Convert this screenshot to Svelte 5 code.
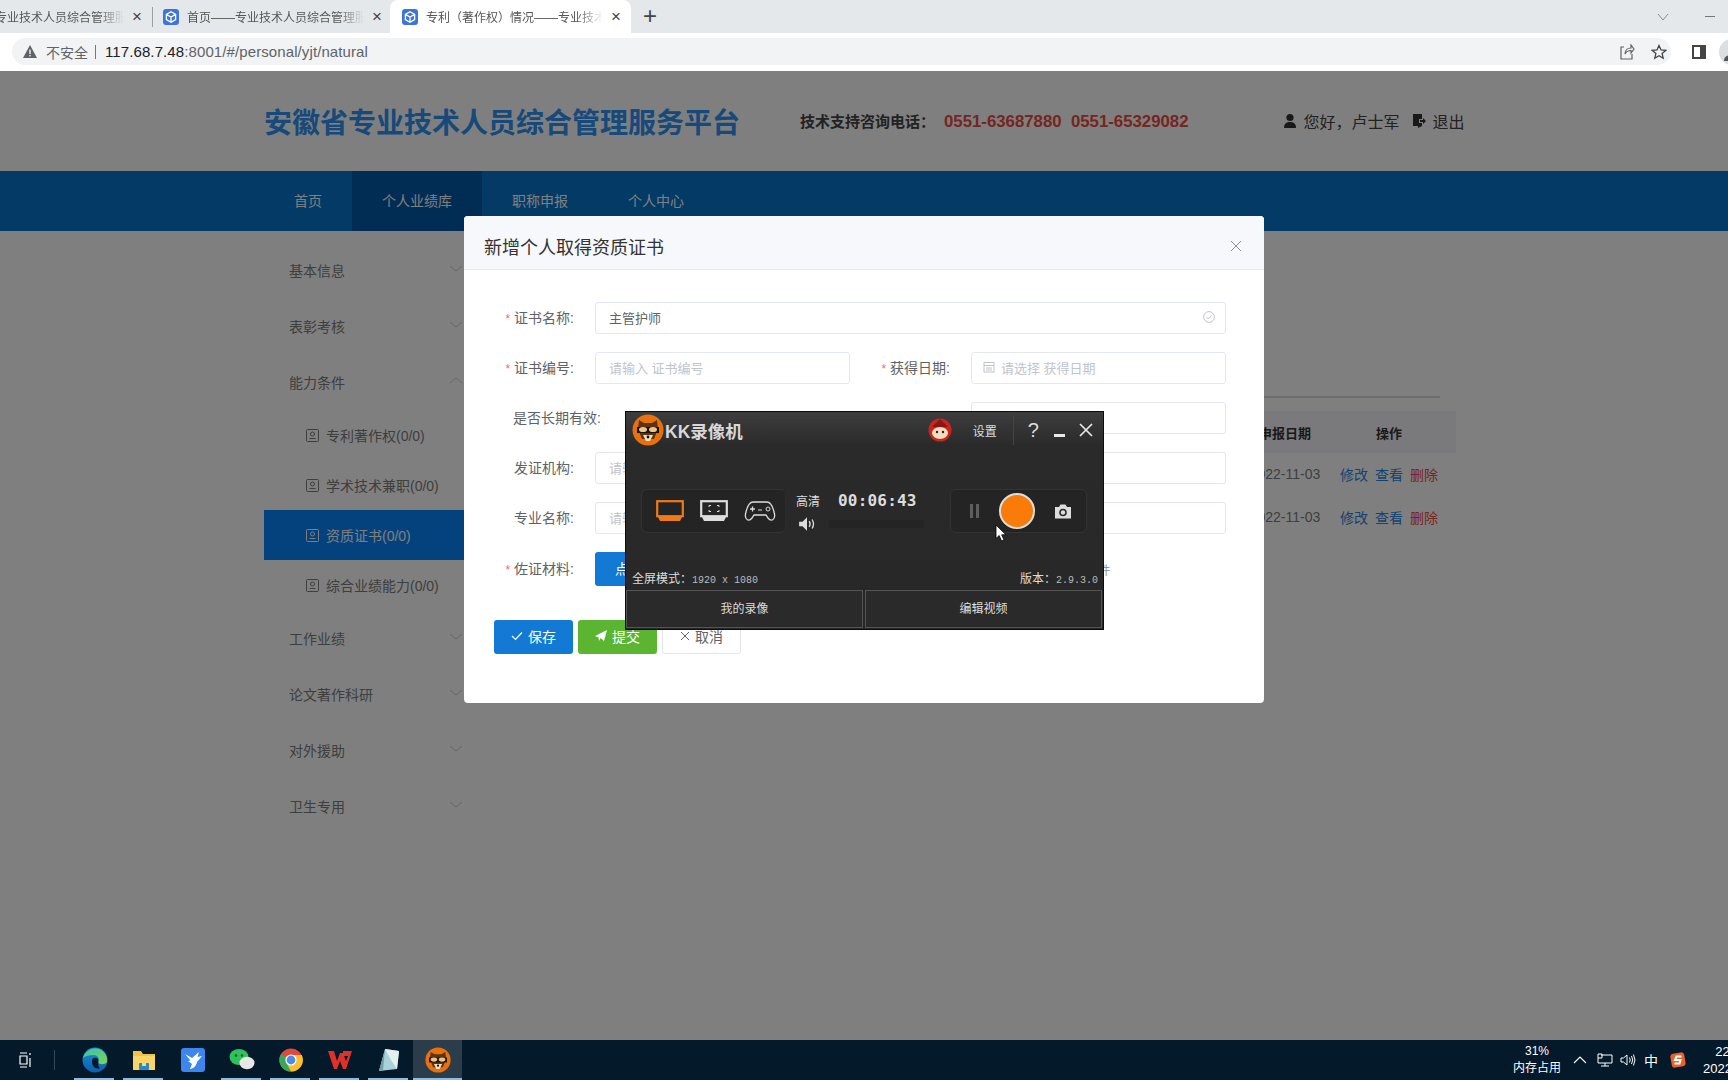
<script>
  const tabs = [
    { title: "首页——专业技术人员综合管理服务平台", active: false },
    { title: "首页——专业技术人员综合管理服务平台", active: false },
    { title: "专利（著作权）情况——专业技术人员综合管理服务平台", active: true },
  ];
  const navItems = ["首页", "个人业绩库", "职称申报", "个人中心"];
  const sideItems = [
    { label: "基本信息" },
    { label: "表彰考核" },
    { label: "能力条件", open: true },
    { label: "专利著作权(0/0)", sub: true },
    { label: "学术技术兼职(0/0)", sub: true },
    { label: "资质证书(0/0)", sub: true, active: true },
    { label: "综合业绩能力(0/0)", sub: true },
    { label: "工作业绩" },
    { label: "论文著作科研" },
    { label: "对外援助" },
    { label: "卫生专用" },
  ];
  const apps = ["edge", "folder", "feishu", "wechat", "chrome", "wps", "note", "kk"];
  const underlined = ["edge", "folder", "wechat", "chrome", "wps", "note"];
</script>

{#snippet favicon()}
  <svg class="favicon" viewBox="0 0 16 16" width="16" height="16">
    <rect width="16" height="16" rx="3" fill="#3f74d8" />
    <path d="M8 2.8 12.6 5.4V10.6L8 13.2 3.4 10.6V5.4Z M3.4 5.4 8 8 12.6 5.4 M8 8V13.2" fill="none" stroke="#fff" stroke-width="1.3" />
  </svg>
{/snippet}

{#snippet kkLogo(size)}
  <svg viewBox="0 0 32 32" width={size} height={size}>
    <circle cx="16" cy="16" r="15.5" fill="#e8700f" />
    <path d="M7 6 12 9H20L25 6 26 15 22 25H10L6 15Z" fill="#5b3413" />
    <path d="M5 13H27V19H5Z" fill="#1d1208" />
    <ellipse cx="11" cy="15.5" rx="4" ry="2.6" fill="#e9c58d" />
    <ellipse cx="21" cy="15.5" rx="4" ry="2.6" fill="#e9c58d" />
    <path d="M11 21H21L18 27H14Z" fill="#f0e0c0" />
    <circle cx="16" cy="23" r="1.4" fill="#1d1208" />
  </svg>
{/snippet}

{#snippet appIcon(name)}
  {#if name === "edge"}
    <svg viewBox="0 0 26 26" width="26" height="26">
      <defs>
        <linearGradient id="edgeA" x1="0" y1="0" x2="1" y2="1"><stop offset="0" stop-color="#35c1b0" /><stop offset="1" stop-color="#7fd650" /></linearGradient>
        <linearGradient id="edgeB" x1="0" y1="0" x2="0" y2="1"><stop offset="0" stop-color="#1b8fd8" /><stop offset="1" stop-color="#0b5fb0" /></linearGradient>
      </defs>
      <circle cx="13" cy="13" r="12.5" fill="url(#edgeB)" />
      <path d="M1 11C3 3 11 0 17 2 23 4 26 10 25 15 23 18 17 18 16 15 18 12 16 8 12 8 7 8 3 9 1 11Z" fill="url(#edgeA)" />
      <path d="M10 14C10 10 14 10 16 12 17 15 15 19 18 21 13 23 10 19 10 14Z" fill="#04192a" />
    </svg>
  {:else if name === "folder"}
    <svg viewBox="0 0 24 24" width="24" height="24">
      <path d="M1 3H9L11 6H23V22H1Z" fill="#f3c443" />
      <path d="M1 8H23V22H1Z" fill="#f8d768" />
      <rect x="7" y="15" width="10" height="7" rx="1" fill="#2a8ad0" />
      <rect x="10" y="15" width="4" height="3" fill="#f8d768" />
    </svg>
  {:else if name === "feishu"}
    <svg viewBox="0 0 24 24" width="24" height="24">
      <rect width="24" height="24" rx="3" fill="#3d86ee" />
      <path d="M4 6 11 10 18 4 16.5 9 21 8 16 14C15 19 11 21 9 21L11 16 7 13 9.5 12.5Z" fill="#fff" />
    </svg>
  {:else if name === "wechat"}
    <svg viewBox="0 0 26 24" width="26" height="24">
      <ellipse cx="10" cy="9" rx="9.5" ry="8" fill="#2fc25b" />
      <ellipse cx="18" cy="15" rx="7.5" ry="6.2" fill="#e6e9e6" />
      <circle cx="7" cy="7.5" r="1.2" fill="#0a5c28" />
      <circle cx="13" cy="7.5" r="1.2" fill="#0a5c28" />
    </svg>
  {:else if name === "chrome"}
    <svg viewBox="0 0 24 24" width="24" height="24">
      <circle cx="12" cy="12" r="11.5" fill="#dd4b3e" />
      <path d="M12 12 2 6A11.5 11.5 0 0 0 12 23.5Z" fill="#3aa757" />
      <path d="M12 7H22.8A11.5 11.5 0 0 1 12 23.5L7 14Z" fill="#fbc02d" />
      <circle cx="12" cy="12" r="5.6" fill="#fff" />
      <circle cx="12" cy="12" r="4.4" fill="#4a8ce8" />
    </svg>
  {:else if name === "wps"}
    <svg viewBox="0 0 26 22" width="26" height="22">
      <path d="M1 2 H7 L10 12 13 4 H16 L19 12 21 7 H16 V2 H25 L19 20 H16 L13 12 10 20 H7Z" fill="#e0302a" />
    </svg>
  {:else if name === "note"}
    <svg viewBox="0 0 24 24" width="24" height="24">
      <path d="M8 1 22 3 20 21 2 23Z" fill="#a8d2da" />
      <path d="M8 1 22 3 20 21 14 12Z" fill="#e4f0ef" />
      <path d="M8 1 2 23 6 22Z" fill="#6f9fa8" />
    </svg>
  {:else}
    {@render kkLogo(26)}
  {/if}
{/snippet}

<div class="screen">
  <!-- browser chrome -->
  <div class="tabstrip">
    {#each tabs as tab}
      <div class="tab" class:active={tab.active}>
        {@render favicon()}
        <span class="tab-title">{tab.title}</span>
        <span class="tab-close">×</span>
      </div>
    {/each}
    <span class="new-tab">+</span>
    <div class="win-btns">
      <svg viewBox="0 0 12 8" width="12" height="8"><path d="M1 1 6 7 11 1" fill="none" stroke="#8a8d91" /></svg>
      <span class="win-min"></span>
    </div>
  </div>

  <div class="toolbar">
    <div class="omnibox">
      <svg viewBox="0 0 14 13" width="14" height="13"><path d="M7 0 14 13H0Z" fill="#5f6368" /><rect x="6.3" y="4.5" width="1.4" height="4.5" fill="#f1f3f4" /><rect x="6.3" y="10" width="1.4" height="1.4" fill="#f1f3f4" /></svg>
      <span class="insecure">不安全</span>
      <span class="omni-sep"></span>
      <span class="url"><b>117.68.7.48</b>:8001/#/personal/yjt/natural</span>
      <div class="omni-icons">
        <svg viewBox="0 0 16 16" width="16" height="16"><path d="M5 3H2V15H13V10 M6 10C6 6 9 4 12 4V1L15 5 12 9V6.5C9 6.5 7 8 6 10Z" fill="none" stroke="#5f6368" stroke-width="1.2" /></svg>
        <svg viewBox="0 0 16 16" width="16" height="16"><path d="M8 1.5 10 6 14.7 6.4 11.1 9.5 12.2 14.2 8 11.7 3.8 14.2 4.9 9.5 1.3 6.4 6 6Z" fill="none" stroke="#444" stroke-width="1.3" /></svg>
      </div>
    </div>
    <svg class="side-panel" viewBox="0 0 14 14" width="14" height="14"><rect x="1" y="1" width="12" height="12" fill="none" stroke="#444" stroke-width="2" /><rect x="8" y="1" width="5" height="12" fill="#444" /></svg>
    <svg class="avatar" viewBox="0 0 26 26" width="26" height="26"><circle cx="13" cy="13" r="13" fill="#dcdfe2" /><circle cx="13" cy="10" r="4" fill="#555" /><path d="M5 22C5 17 9 16 13 16S21 17 21 22Z" fill="#555" /></svg>
  </div>

  <!-- page -->
  <div class="page">
    <header class="site-head">
      <h1>安徽省专业技术人员综合管理服务平台</h1>
      <div class="support">技术支持咨询电话：<span class="phones">0551-63687880&nbsp;&nbsp;0551-65329082</span></div>
      <div class="user">
        <svg viewBox="0 0 14 16" width="14" height="16"><circle cx="7" cy="4.5" r="3.6" fill="#333" /><path d="M1 15C1 10 4 9 7 9S13 10 13 15Z" fill="#333" /></svg>
        <span>您好，卢士军</span>
        <svg class="exit" viewBox="0 0 14 16" width="14" height="16"><path d="M1 1H10V6H7V10H10V13L6 15V13H1Z" fill="#333" /><path d="M8 7H11V5L14 8 11 11V9H8Z" fill="#333" /></svg>
        <span>退出</span>
      </div>
    </header>

    <nav class="site-nav">
      {#each navItems as item, i}
        <span class="nav-item" class:current={i === 1}>{item}</span>
      {/each}
    </nav>

    <div class="main">
      <aside class="sidebar">
        {#each sideItems as item}
          {#if item.sub}
            <div class="side-sub" class:active={item.active}>
              <svg viewBox="0 0 13 13" width="13" height="13"><rect x="0.5" y="0.5" width="12" height="12" rx="1" fill="none" stroke="currentColor" /><circle cx="6.5" cy="5" r="2" fill="none" stroke="currentColor" /><path d="M3.5 9.5H9.5" stroke="currentColor" /></svg>
              {item.label}
            </div>
          {:else}
            <div class="side-item">
              {item.label}
              <svg viewBox="0 0 14 7" width="14" height="7"><path d={item.open ? "M1 6 7 1 13 6" : "M1 1 7 6 13 1"} fill="none" stroke="#d0d0d0" /></svg>
            </div>
          {/if}
        {/each}
      </aside>

      <section class="content">
        <div class="rule"></div>
        <div class="t-row t-head"><span>申报日期</span><span>操作</span></div>
        {#each [0, 1] as row}
          <div class="t-row">
            <span class="t-date">2022-11-03</span>
            <span class="t-ops"><i class="blue">修改</i><i class="blue">查看</i><i class="red">删除</i></span>
          </div>
        {/each}
      </section>
    </div>

    <!-- modal -->
    <div class="overlay">
      <div class="modal">
        <div class="modal-head">
          <span>新增个人取得资质证书</span>
          <svg viewBox="0 0 12 12" width="12" height="12"><path d="M1 1 11 11 M11 1 1 11" stroke="#909399" fill="none" /></svg>
        </div>
        <div class="modal-body">
          <div class="form">
            <div class="field wide">
              <label><em>*</em> 证书名称:</label>
              <div class="input">
                <span class="value">主管护师</span>
                <svg class="ok" viewBox="0 0 12 12" width="12" height="12"><circle cx="6" cy="6" r="5.4" fill="none" stroke="#c0c4cc" /><path d="M3.5 6 5.5 8 8.5 4.5" fill="none" stroke="#c0c4cc" /></svg>
              </div>
            </div>
            <div class="field">
              <label><em>*</em> 证书编号:</label>
              <div class="input">请输入 证书编号</div>
            </div>
            <div class="field">
              <label><em>*</em> 获得日期:</label>
              <div class="input">
                <svg class="cal" viewBox="0 0 12 12" width="12" height="12"><rect x="1" y="1.5" width="10" height="9.5" fill="none" stroke="#c0c4cc" /><path d="M1 4.5H11 M3 7H9 M3 9H9" stroke="#c0c4cc" /></svg>
                请选择 获得日期
              </div>
            </div>
            <div class="field">
              <label class="long">是否长期有效:</label>
            </div>
            <div class="field">
              <label></label>
              <div class="input"></div>
            </div>
            <div class="field">
              <label>发证机构:</label>
              <div class="input">请输入 发证机构</div>
            </div>
            <div class="field">
              <label></label>
              <div class="input"></div>
            </div>
            <div class="field">
              <label>专业名称:</label>
              <div class="input">请输入 专业名称</div>
            </div>
            <div class="field">
              <label></label>
              <div class="input"></div>
            </div>
            <div class="field wide upload">
              <label><em>*</em> 佐证材料:</label>
              <span class="btn primary">点击上传</span>
              <span class="hint">只能上传jpg/png/pdf等格式的文件</span>
            </div>
          </div>
          <div class="actions">
            <span class="btn primary">
              <svg viewBox="0 0 12 10" width="12" height="10"><path d="M1 5 4.5 8.5 11 1.5" fill="none" stroke="#fff" stroke-width="1.2" /></svg>
              保存
            </span>
            <span class="btn green">
              <svg viewBox="0 0 12 12" width="12" height="12"><path d="M0 6 12 0 9 11 5.5 8 4 11 3.5 7.5Z" fill="#fff" /></svg>
              提交
            </span>
            <span class="btn plain">
              <svg viewBox="0 0 10 10" width="10" height="10"><path d="M1 1 9 9 M9 1 1 9" stroke="#606266" fill="none" /></svg>
              取消
            </span>
          </div>
        </div>
      </div>
    </div>
  </div>

  <!-- taskbar -->
  <footer class="taskbar">
    <svg class="taskview" viewBox="0 0 16 16" width="16" height="16"><path d="M3 1H10 M3 15H10 M3 4H10V12H3Z M13 1V3 M13 6V15" fill="none" stroke="#fff" stroke-width="1.2" /></svg>
    <span class="task-sep"></span>
    <div class="apps">
      {#each apps as app}
        <div class="app" class:open={underlined.includes(app)} class:running={app === "kk"}>
          {@render appIcon(app)}
        </div>
      {/each}
    </div>
    <div class="tray">
      <div class="mem"><span>31%</span><span>内存占用</span></div>
      <svg viewBox="0 0 14 8" width="14" height="8"><path d="M1 7 7 1 13 7" fill="none" stroke="#fff" stroke-width="1.1" /></svg>
      <svg class="net" viewBox="0 0 16 14" width="16" height="14"><path d="M4 2H15V10H1V1H5V5H1 M8 10V13 M4 13H12" fill="none" stroke="#fff" /></svg>
      <svg viewBox="0 0 16 14" width="16" height="14"><path d="M1 5H3.5L7 2V12L3.5 9H1Z M9.5 4.5Q11 7 9.5 9.5 M11.5 3Q14 7 11.5 11 M13.5 1.5Q16.5 7 13.5 12.5" fill="none" stroke="#fff" /></svg>
      <span class="ime">中</span>
      <svg class="sogou" viewBox="0 0 16 16" width="16" height="16"><rect x="1" y="1" width="14" height="14" rx="3" fill="#e8622a" transform="rotate(-10 8 8)" /><path d="M11.5 4.5H6.5L5 8H10.5L9.5 11.5H4.5" fill="none" stroke="#fff" stroke-width="2" /></svg>
      <div class="clock"><span>22:13</span><span>2022/11/3</span></div>
    </div>
  </footer>

  <!-- recorder window floats above everything -->
  <div class="kk">
    <div class="kk-title">
      {@render kkLogo(32)}
      <span class="kk-name">KK录像机</span>
      <svg class="kk-mascot" viewBox="0 0 24 24" width="24" height="24">
        <circle cx="12" cy="12" r="11.5" fill="#c8261f" />
        <path d="M12 1 20 9H4Z" fill="#8a1712" />
        <ellipse cx="12" cy="15" rx="8" ry="6" fill="#f4dcc0" />
        <circle cx="9" cy="14" r="1.2" fill="#222" />
        <circle cx="15" cy="14" r="1.2" fill="#222" />
      </svg>
      <span class="kk-set">设置</span>
      <span class="kk-sep"></span>
      <span class="kk-help">?</span>
      <span class="kk-min"></span>
      <svg class="kk-close" viewBox="0 0 14 14" width="14" height="14"><path d="M1 1 13 13 M13 1 1 13" stroke="#e8e8e8" stroke-width="1.7" /></svg>
    </div>

    <div class="kk-main">
      <div class="kk-panel modes">
        <svg viewBox="0 0 28 22" width="28" height="22"><rect x="1.2" y="1.2" width="25.6" height="15" fill="none" stroke="#f07a1a" stroke-width="2.2" /><path d="M2 17H26L24 21H4Z" fill="#f07a1a" /></svg>
        <svg viewBox="0 0 28 22" width="28" height="22"><rect x="1.2" y="1.2" width="25.6" height="15" fill="none" stroke="#ddd" stroke-width="2.2" /><path d="M2 17H26L24 21H4Z" fill="#ddd" /><path d="M9 7V5.5H11 M17 5.5H19V7 M19 10V11.5H17 M11 11.5H9V10" fill="none" stroke="#ddd" /></svg>
        <svg viewBox="0 0 32 22" width="32" height="22"><path d="M9 2H23C27 2 29 7 30.5 14 31.5 20 27 22 24 18L22 15H10L8 18C5 22 .5 20 1.5 14 3 7 5 2 9 2Z" fill="none" stroke="#ddd" stroke-width="1.3" /><path d="M6 9H11 M8.5 6.5V11.5" stroke="#ddd" stroke-width="1.3" /><path d="M14 10H18" stroke="#ddd" /><circle cx="24" cy="9" r="2" fill="none" stroke="#ddd" /></svg>
      </div>
      <div class="kk-mid">
        <div class="kk-mid-top"><span class="hd">高清</span><span class="timer">00:06:43</span></div>
        <div class="kk-mid-bot">
          <svg viewBox="0 0 16 14" width="18" height="16"><path d="M1 5H4L8 1V13L4 9H1Z" fill="#ddd" /><path d="M10 4.5Q11.5 7 10 9.5 M12.5 3Q15 7 12.5 11" fill="none" stroke="#ddd" stroke-width="1.2" /></svg>
          <span class="vol"></span>
        </div>
      </div>
      <div class="kk-panel controls">
        <span class="pause"></span>
        <span class="rec"></span>
        <svg viewBox="0 0 18 15" width="18" height="15"><path d="M1 3H5L6.5 .5H11.5L13 3H17V14.5H1Z" fill="#ddd" /><circle cx="9" cy="8.5" r="3.8" fill="#2a2a2a" /><circle cx="9" cy="8.5" r="2.2" fill="#ddd" /></svg>
      </div>
    </div>

    <div class="kk-info">
      <span>全屏模式：<tt>1920 x 1080</tt></span>
      <span>版本：<tt>2.9.3.0</tt></span>
    </div>

    <div class="kk-bottom">
      <span>我的录像</span>
      <span>编辑视频</span>
    </div>
  </div>

  <svg class="cursor" viewBox="0 0 12 18" width="12" height="18"><path d="M1 1V14.5L4.2 11.5 6.5 17 9 16 6.7 10.8H11Z" fill="#fff" stroke="#000" stroke-width="0.8" /></svg>
</div>

<style>
  .screen {
    position: relative;
    width: 1728px;
    height: 1080px;
    overflow: hidden;
    display: flex;
    flex-direction: column;
    font-family: "Liberation Sans", "Noto Sans CJK SC", sans-serif;
    font-size: 14px;
    background: #fff;
  }

  /* browser chrome */
  .tabstrip {
    height: 33px;
    flex: none;
    display: flex;
    align-items: flex-end;
    margin-left: -88px;
    background: #e5e8eb;
    color: #555;
  }
  .tab {
    position: relative;
    width: 240px;
    height: 33px;
    flex: none;
    box-sizing: border-box;
    padding: 0 10px 0 11px;
    display: flex;
    align-items: center;
    gap: 8px;
    font-size: 12px;
  }
  .tab:nth-child(2)::after {
    content: "";
    position: absolute;
    left: 0;
    top: 7px;
    height: 20px;
    border-left: 1px solid #9a9da1;
  }
  .tab.active {
    background: #fff;
    border-radius: 8px 8px 0 0;
    margin-left: -2px;
    width: 241px;
    padding-left: 12px;
  }
  .favicon {
    flex: none;
  }
  .tab-title {
    flex: 1;
    overflow: hidden;
    white-space: nowrap;
    mask-image: linear-gradient(to right, #000 85%, transparent 100%);
  }
  .tab-close {
    flex: none;
    font-size: 17px;
    line-height: 1;
    color: #444;
  }
  .new-tab {
    margin: 0 0 4px 12px;
    font-size: 24px;
    line-height: 26px;
    font-weight: 300;
    color: #444;
  }
  .win-btns {
    margin-left: auto;
    align-self: center;
    display: flex;
    align-items: center;
    gap: 36px;
    margin-right: 13px;
  }
  .win-min {
    width: 10px;
    border-top: 1px solid #777;
  }

  .toolbar {
    height: 38px;
    flex: none;
    box-sizing: border-box;
    padding: 5px 0 6px 12px;
    display: flex;
    align-items: center;
    background: #fff;
  }
  .omnibox {
    width: 1659px;
    height: 27px;
    flex: none;
    box-sizing: border-box;
    padding: 0 4px 0 11px;
    display: flex;
    align-items: center;
    background: #f1f3f4;
    border-radius: 14px;
    color: #5f6368;
  }
  .insecure {
    margin-left: 9px;
    font-size: 14px;
  }
  .omni-sep {
    height: 14px;
    margin: 0 9px 0 7px;
    border-left: 1px solid #777;
  }
  .url {
    font-size: 15px;
    letter-spacing: 0.1px;
  }
  .url b {
    font-weight: 400;
    color: #202124;
  }
  .omni-icons {
    margin-left: auto;
    display: flex;
    gap: 16px;
  }
  .side-panel {
    margin-left: 21px;
    flex: none;
  }
  .avatar {
    margin-left: 13px;
    flex: none;
  }

  /* page */
  .page {
    position: relative;
    flex: 1;
    min-height: 0;
    overflow: hidden;
    background: #fff;
  }
  .site-head {
    height: 100px;
    box-sizing: border-box;
    padding-left: 264px;
    display: flex;
    align-items: center;
  }
  .site-head h1 {
    margin: 0;
    font-size: 28px;
    font-weight: 700;
    color: #2e92f4;
    white-space: nowrap;
  }
  .support {
    margin-left: 60px;
    font-size: 15px;
    font-weight: 700;
    color: #444;
  }
  .phones {
    margin-left: 9px;
    font-size: 16.8px;
    color: #ee4a40;
  }
  .user {
    margin-left: 94px;
    display: flex;
    align-items: center;
    gap: 7px;
    font-size: 16px;
    color: #444;
  }
  .user .exit {
    margin-left: 5px;
  }
  .site-nav {
    height: 60px;
    padding-left: 264px;
    display: flex;
    background: #0674cc;
  }
  .nav-item {
    padding: 0 30px;
    line-height: 60px;
    color: #fff;
  }
  .nav-item.current {
    background: #025aaa;
  }
  .main {
    display: flex;
    padding: 11px 264px 0;
  }
  .sidebar {
    width: 222px;
    flex: none;
    color: #7c7c7c;
  }
  .side-item {
    height: 56px;
    box-sizing: border-box;
    padding: 0 23px 0 25px;
    display: flex;
    align-items: center;
    justify-content: space-between;
  }
  .side-item svg {
    margin-top: -3px;
  }
  .side-sub {
    height: 50px;
    padding-left: 42px;
    display: flex;
    align-items: center;
    gap: 7px;
  }
  .side-sub.active {
    background: #0684f8;
    color: #fff;
  }
  .content {
    flex: 1;
    min-width: 0;
    padding-top: 154px;
    color: #7c7c7c;
  }
  .rule {
    width: 954px;
    margin-bottom: 13px;
    border-top: 2px solid #d8d8d8;
  }
  .t-row {
    height: 43px;
    box-sizing: border-box;
    display: grid;
    grid-template-columns: 100px 108px;
    justify-content: end;
    margin-right: 8px;
    padding: 0 13px 2px 0;
    align-items: center;
    text-align: center;
  }
  .t-head {
    height: 42px;
    padding-bottom: 0;
    font-size: 13px;
    font-weight: 700;
    color: #333;
    background: #f4f4f8;
  }
  .t-ops {
    display: flex;
    justify-content: center;
    gap: 7px;
  }
  .t-ops i {
    font-style: normal;
  }
  .blue {
    color: #2a86e0;
  }
  .red {
    color: #f24a3c;
  }

  /* modal */
  .overlay {
    position: absolute;
    inset: 0;
    background: rgba(0, 0, 0, 0.5);
  }
  .modal {
    width: 800px;
    margin: 145px auto 0;
    background: #fff;
    border-radius: 4px;
    overflow: hidden;
  }
  .modal-head {
    height: 54px;
    box-sizing: border-box;
    padding: 7px 22px 0 20px;
    display: flex;
    align-items: center;
    justify-content: space-between;
    background: #f7f8fc;
    border-bottom: 1px solid #e8eaee;
    font-size: 18px;
    color: #333;
  }
  .modal-body {
    padding: 32px 38px 49px 30px;
  }
  .form {
    display: grid;
    grid-template-columns: 356px 356px;
    gap: 18px 20px;
  }
  .field {
    display: flex;
    align-items: center;
    min-height: 32px;
    min-width: 0;
    color: #606266;
  }
  .field.wide {
    grid-column: span 2;
  }
  .field label {
    width: 80px;
    flex: none;
    margin-right: 21px;
    padding-bottom: 2px;
    text-align: right;
    white-space: nowrap;
  }
  .field label em {
    font-style: normal;
    font-size: 12px;
    color: #f56c6c;
  }
  .field label.long {
    box-sizing: border-box;
    padding-left: 19px;
    text-align: left;
  }
  .input {
    flex: 1;
    height: 32px;
    box-sizing: border-box;
    padding: 0 13px 2px;
    display: flex;
    align-items: center;
    gap: 6px;
    border: 1px solid #e4e7ed;
    border-radius: 3px;
    font-size: 13px;
    color: #c0c4cc;
  }
  .cal {
    margin-left: -2px;
  }
  .value {
    font-size: 13px;
    color: #606266;
  }
  .ok {
    margin-left: auto;
    margin-right: -3px;
  }
  .upload .btn {
    height: 34px;
    width: 96px;
  }
  .hint {
    margin-left: 240px;
    font-size: 12px;
    color: #909399;
    white-space: nowrap;
  }
  .actions {
    display: flex;
    gap: 5px;
    margin-top: 34px;
  }
  .btn {
    width: 79px;
    height: 34px;
    box-sizing: border-box;
    padding-bottom: 2px;
    display: inline-flex;
    align-items: center;
    justify-content: center;
    gap: 5px;
    border-radius: 3px;
    flex: none;
  }
  .primary {
    background: #1279d4;
    color: #fff;
  }
  .green {
    background: #5cb531;
    color: #fff;
  }
  .plain {
    background: #fff;
    border: 1px solid #e4e4ee;
    color: #606266;
  }

  /* taskbar */
  .taskbar {
    height: 40px;
    flex: none;
    display: flex;
    align-items: center;
    background: #04192a;
    color: #fff;
    font-size: 13px;
  }
  .taskview {
    margin-left: 17px;
    flex: none;
  }
  .task-sep {
    width: 1px;
    height: 20px;
    margin-left: 21px;
    background: #33485a;
    flex: none;
  }
  .apps {
    display: flex;
    margin-left: 15px;
    flex: none;
  }
  .app {
    position: relative;
    width: 49px;
    height: 40px;
    display: flex;
    align-items: center;
    justify-content: center;
  }
  .app.open::after {
    content: "";
    position: absolute;
    left: 4px;
    right: 5px;
    bottom: 0;
    height: 2px;
    background: #8fbbdf;
  }
  .app.running {
    background: #2b3d4b;
  }
  .app.running::after {
    content: "";
    position: absolute;
    left: 0;
    right: 0;
    bottom: 0;
    height: 2px;
    background: #8fbbdf;
  }
  .tray {
    margin-left: 1051px;
    display: flex;
    align-items: center;
    gap: 9px;
    flex: none;
  }
  .mem,
  .clock {
    display: flex;
    flex-direction: column;
    align-items: center;
    line-height: 17px;
    font-size: 12px;
  }
  .mem {
    margin-right: 3px;
  }
  .net {
    margin: 0 -2px 0 1px;
  }
  .sogou {
    margin-left: 3px;
  }
  .clock {
    margin-left: 8px;
    white-space: nowrap;
    font-size: 13px;
  }
  .ime {
    font-size: 14px;
    margin-left: -1px;
  }

  /* recorder window */
  .kk {
    position: absolute;
    left: 625px;
    top: 411px;
    width: 479px;
    height: 219px;
    box-sizing: border-box;
    display: flex;
    flex-direction: column;
    background: linear-gradient(#3d3d3d 0, #2a2a2a 34px, #272727 100%);
    border: 1px solid #0c0c0c;
    color: #ddd;
  }
  .kk-title {
    height: 36px;
    flex: none;
    box-sizing: border-box;
    padding: 0 10px 0 6px;
    display: flex;
    align-items: center;
    white-space: nowrap;
  }
  .kk-title svg {
    flex: none;
  }
  .kk-name {
    margin-left: 1px;
    font-size: 17.5px;
    font-weight: 700;
    color: #d8d8d8;
  }
  .kk-mascot {
    margin-left: 185px;
  }
  .kk-set {
    margin-left: 21px;
    font-size: 12px;
  }
  .kk-sep {
    height: 30px;
    margin-left: 16px;
    border-left: 1px solid #444;
  }
  .kk-help {
    margin-left: 14px;
    font-size: 20px;
  }
  .kk-min {
    width: 11px;
    height: 3px;
    margin: 10px 0 0 15px;
    background: #e8e8e8;
  }
  .kk-close {
    margin-left: 14px;
  }
  .kk-main {
    display: flex;
    align-items: center;
    margin-top: 41px;
    padding-left: 15px;
    height: 44px;
    flex: none;
  }
  .kk-panel {
    height: 44px;
    box-sizing: border-box;
    display: flex;
    align-items: center;
    border: 1px solid #333;
    border-radius: 6px;
    background: #242424;
    flex: none;
  }
  .modes {
    width: 145px;
    padding-left: 14px;
    gap: 16px;
    border-right-color: #2c2c2c;
  }
  .kk-mid {
    width: 164px;
    flex: none;
    box-sizing: border-box;
    padding-left: 10px;
  }
  .kk-mid-top {
    display: flex;
    align-items: center;
    gap: 18px;
    height: 24px;
    margin-top: -2px;
  }
  .hd {
    font-size: 12px;
  }
  .timer {
    font-family: "DejaVu Sans Mono", "Liberation Mono", monospace;
    font-size: 16px;
    font-weight: 700;
    letter-spacing: 0.2px;
  }
  .kk-mid-bot {
    display: flex;
    align-items: center;
    gap: 13px;
    margin-top: 3px;
    padding-left: 2px;
  }
  .vol {
    width: 95px;
    height: 8px;
    background: #242424;
  }
  .controls {
    width: 137px;
    padding-left: 19px;
  }
  .pause {
    width: 9px;
    height: 14px;
    border-left: 3px solid #5e5e5e;
    border-right: 3px solid #5e5e5e;
    box-sizing: border-box;
    margin-right: 20px;
  }
  .rec {
    width: 32px;
    height: 32px;
    margin-right: 19px;
    border: 2px solid #ddd;
    border-radius: 50%;
    background: #f97b0a;
    box-sizing: content-box;
  }
  .kk-info {
    display: flex;
    justify-content: space-between;
    margin-top: 38px;
    padding: 0 5px 0 6px;
    font-size: 12px;
    line-height: 16px;
  }
  tt {
    font-family: "Liberation Mono", monospace;
    font-size: 10px;
    color: #bbb;
  }
  .kk-bottom {
    display: flex;
    gap: 2px;
    margin-top: auto;
    padding: 0 1px 1px 0;
    font-size: 12px;
  }
  .kk-bottom span {
    flex: 1;
    height: 38px;
    box-sizing: border-box;
    padding-bottom: 3px;
    display: flex;
    align-items: center;
    justify-content: center;
    border: 1px solid #545454;
    background: #2a2a2a;
  }

  .cursor {
    position: absolute;
    left: 995px;
    top: 524px;
  }
</style>
